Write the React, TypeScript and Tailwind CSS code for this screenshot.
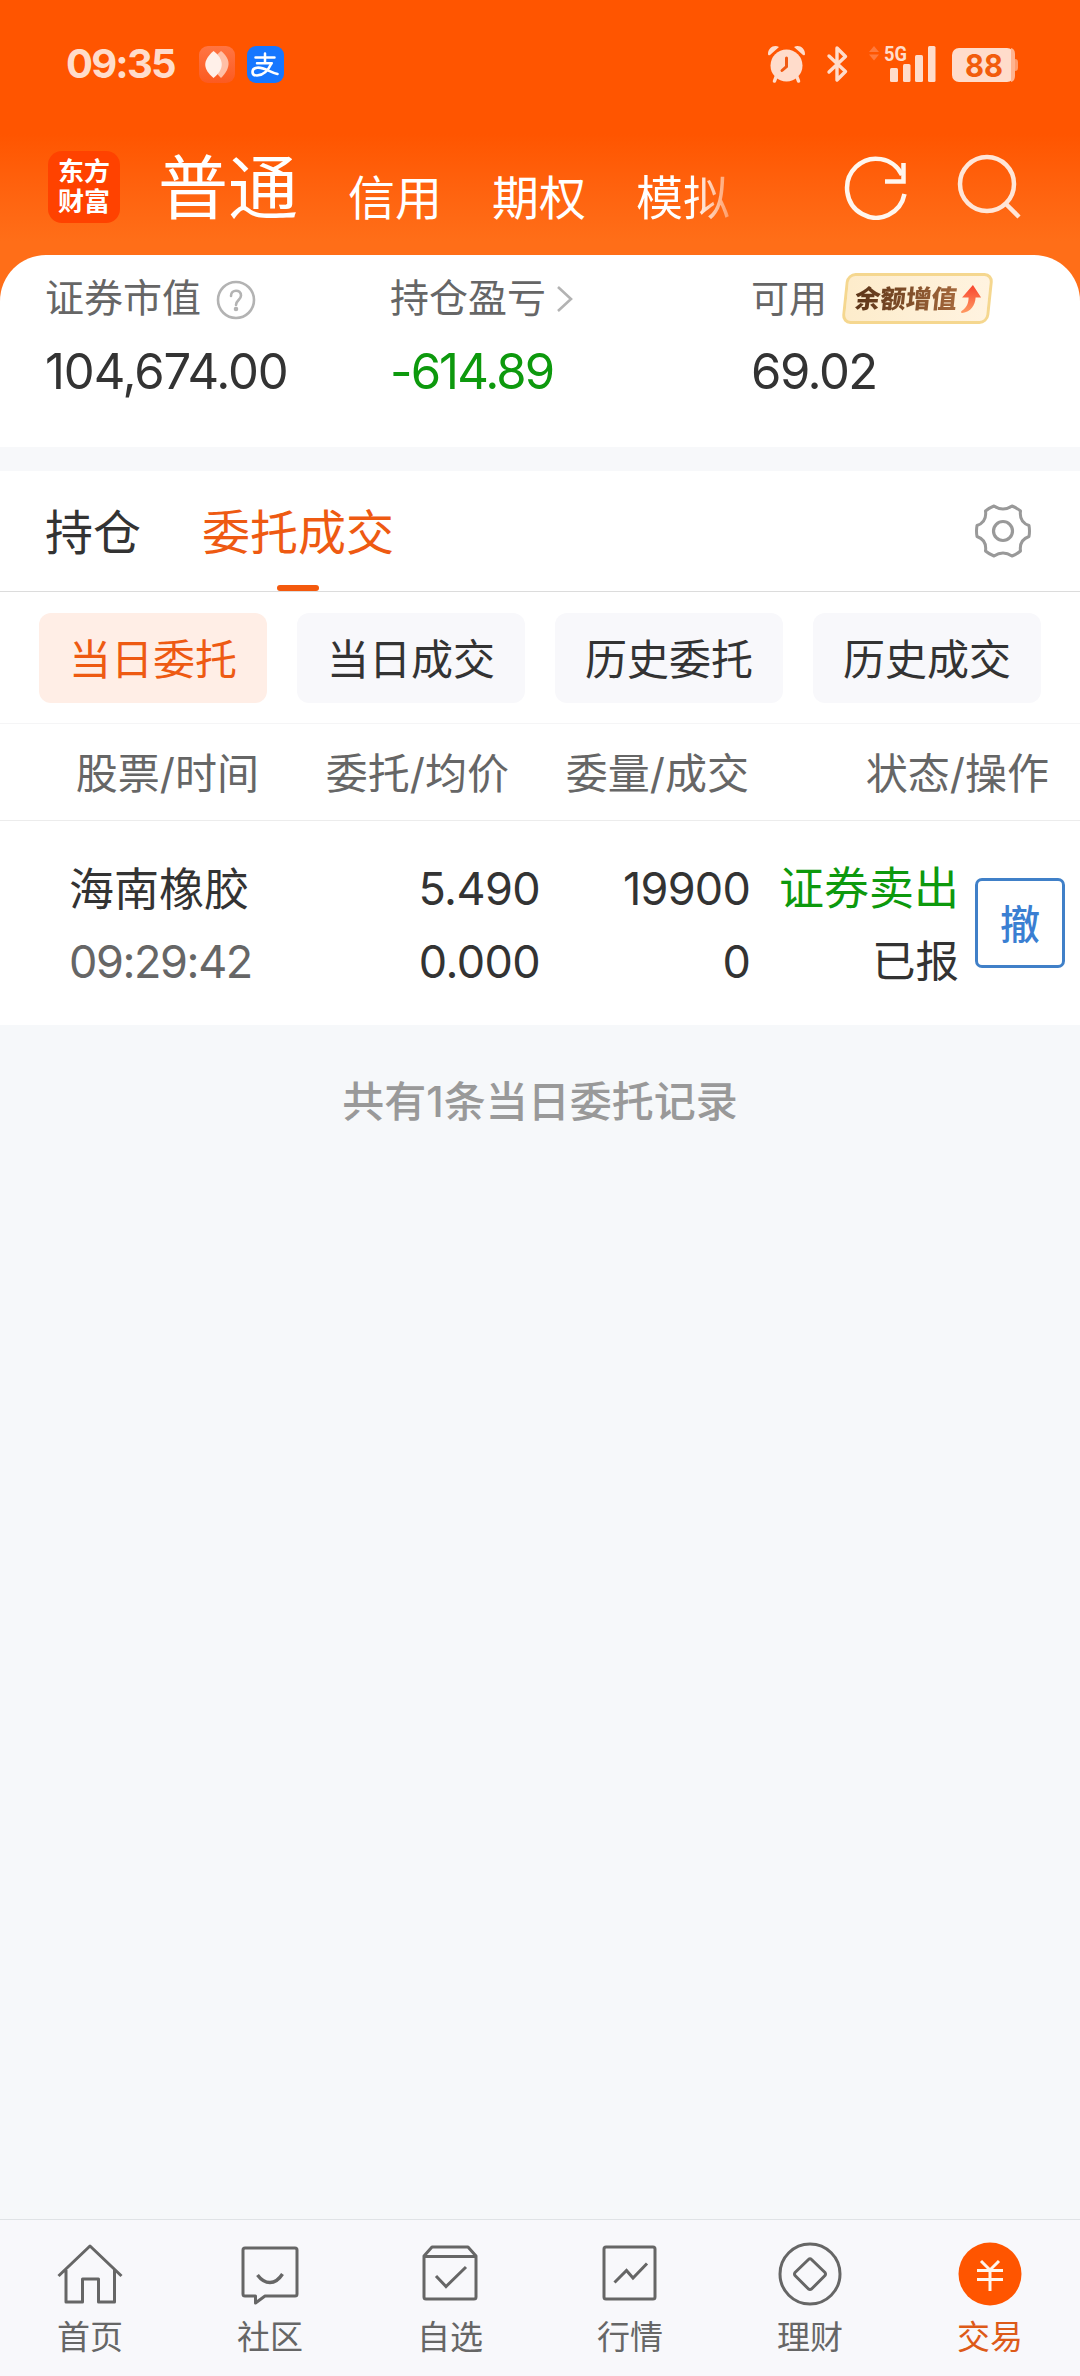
import type { ReactNode } from "react";

const chips = ["当日委托", "当日成交", "历史委托", "历史成交"];

function StatusBar() {
  return (
    <div className="flex h-[130px] items-start justify-between pl-[66px] pr-[60px]">
      <div className="flex items-center pt-[43px]">
        <span className="w-[133px] text-[40px] leading-[42px] font-bold tracking-[-1.8px] text-[#ffdccb]">09:35</span>
        <svg width="36" height="37" viewBox="0 0 36 37" className="mr-[12px]">
          <defs>
            <linearGradient id="petal" x1="0" y1="0" x2="0" y2="1">
              <stop offset="0" stopColor="#ff7543" />
              <stop offset="1" stopColor="#fc5a20" />
            </linearGradient>
          </defs>
          <rect width="36" height="37" rx="9" fill="url(#petal)" />
          <path d="M22 5C31 12 33 21 22 32C12 23 12 13 22 5Z" fill="#ffbfa6" />
          <path d="M14.500 5C3 15 4 23 14.500 32C26 23 25 13 14.500 5Z" fill="#fff0e9" />
        </svg>
        <span className="flex h-[37px] w-[37px] items-center justify-center rounded-[9px] bg-[#1677ff]">
          <svg width="37" height="37" viewBox="0 0 37 37" fill="none" stroke="#fff" strokeLinecap="round">
            <path d="M8.500 11.500H27.500M18 7.500V17M10 17.300H24.500" strokeWidth="2.500" />
            <path d="M24.500 17.300C21 25 16 29.500 10 29.500C4 29.500 4 22.500 10 21.700C17 20.800 22 26 30.500 28" strokeWidth="2.600" />
          </svg>
        </span>
      </div>
      <svg width="253" height="42" viewBox="767 43 253 42" className="mt-[43px]">
        <g fill="#ffdccb">
          <circle cx="786.500" cy="65.500" r="16" />
          <path d="M768 54C768 48 774 44 779 47L770 55Q768 56 768 54ZM805 54C805 48 799 44 794 47L803 55Q805 56 805 54Z" />
          <path d="M776 77L774.500 81M797 77L798.500 81" stroke="#ffdccb" strokeWidth="3.500" strokeLinecap="round" />
          <rect x="890" y="68" width="8" height="14" rx="1.500" />
          <rect x="903" y="64" width="7.500" height="18" rx="1.500" />
          <rect x="915" y="55" width="8" height="27" rx="1.500" />
          <rect x="928" y="46" width="7.500" height="36" rx="1.500" />
          <rect x="952" y="48" width="62" height="34" rx="7" />
        </g>
        <path d="M786.500 58V66.500L782 70.500" fill="none" stroke="#f05a14" strokeWidth="3" strokeLinecap="round" />
        <path d="M829 56L845.500 71.500L837 80V48L845.500 56.500L829 72" fill="none" stroke="#ffdccb" strokeWidth="3.400" strokeLinecap="round" strokeLinejoin="round" />
        <path d="M869 52L874 46L879 52ZM869 54.500L874 60.500L879 54.500Z" fill="#ff7a3c" />
        <path d="M1011 48Q1015 49 1015 54V76Q1015 81 1011 82Z" fill="#ffb38f" />
        <path d="M1015 59Q1018 59 1018 62V68Q1018 71 1015 71Z" fill="#ff9b6c" />
        <text x="884" y="61" fontFamily="Roboto" fontWeight="700" fontSize="21" textLength="23" lengthAdjust="spacingAndGlyphs" fill="#ffdccb">5G</text>
        <text x="965" y="76.500" fontFamily="Inter" fontWeight="700" fontSize="31" textLength="38" lengthAdjust="spacingAndGlyphs" fill="#f25c0c">88</text>
      </svg>
    </div>
  );
}

function TopTabs() {
  return (
    <div className="flex h-[125px] items-start pl-[48px] text-white">
      <div className="mt-[21px] flex h-[72px] w-[72px] flex-col items-center justify-center rounded-[14px] bg-[#ff4200] text-[26px] leading-[30px] font-bold">
        <span>东方</span>
        <span>财富</span>
      </div>
      <span className="mt-[24px] ml-[38px] w-[190px] text-[70px] leading-[70px]">普通</span>
      <div className="mt-[43px] flex h-[50px] gap-[50px] text-[47px] leading-[50px]">
        <span>信用</span>
        <span>期权</span>
        <span className="bg-linear-to-r from-white from-60% to-[#ff9a62] bg-clip-text text-transparent">模拟</span>
      </div>
      <svg width="64" height="66" viewBox="844 155 64 66" className="mt-[24px] ml-[114px]" fill="none" stroke="#fff6ee" strokeWidth="4.500">
        <path d="M904.500 195A29 29.500 0 1 1 902 176" />
        <path d="M903.500 164V182.500H885" />
      </svg>
      <svg width="66" height="68" viewBox="957 153 66 68" className="mt-[23px] ml-[49px]" fill="none" stroke="#ffe6d8" strokeWidth="4.500">
        <circle cx="987" cy="184" r="27" />
        <path d="M1005 203L1019 217" />
      </svg>
    </div>
  );
}

function Summary() {
  return (
    <div className="flex h-[192px] rounded-t-[46px] bg-white text-[39px] text-[#666]">
      <div className="w-[345px] pl-[45px]">
        <div className="mt-[18px] flex h-[50px] items-center">
          <span>证券市值</span>
          <svg width="40" height="40" viewBox="0 0 40 40" className="mt-[3px] ml-[15px]" fill="none" stroke="#b3b3b3" strokeWidth="2.600">
            <circle cx="20" cy="20" r="18" />
            <path d="M15 16C15 9 25 9 25 15.500C25 20 20 20 20 25" strokeLinecap="round" />
            <circle cx="20" cy="29" r="1" fill="#b3b3b3" />
          </svg>
        </div>
        <Amount className="tracking-[-1.1px] text-[#333]">104,674.00</Amount>
      </div>
      <div className="w-[360px] pl-[45px]">
        <div className="mt-[18px] flex h-[50px] items-center">
          <span>持仓盈亏</span>
          <svg width="18" height="28" viewBox="0 0 18 28" className="mt-[2px] ml-[10px]" fill="none" stroke="#b3b3b3" strokeWidth="2.600">
            <path d="M2 2L15 14L2 26" />
          </svg>
        </div>
        <Amount className="tracking-[-1.9px] text-[#0d990d]">-614.89</Amount>
      </div>
      <div className="pl-[46px]">
        <div className="mt-[18px] flex h-[50px] items-center">
          <span className="w-[93px] text-[38px]">可用</span>
          <span className="mt-[1px] flex h-[51px] w-[147px] -skew-x-6 items-center rounded-[9px] border-[3px] border-[#f5d78f] bg-linear-to-r from-[#fdeccb] to-[#fff3e0] pl-[8px]">
            <span className="bg-linear-to-r from-[#5c3518] to-[#a4683c] bg-clip-text text-[25.500px] leading-[40px] font-black text-transparent">余额增值</span>
            <svg width="22" height="30" viewBox="0 0 22 30" className="ml-[4px]">
              <defs>
                <linearGradient id="rise" x1="0" y1="0" x2="0" y2="1">
                  <stop offset="0" stopColor="#f8442e" />
                  <stop offset="1" stopColor="#ff9a62" />
                </linearGradient>
              </defs>
              <path d="M10.500 1L20 13.500H14.500C15 21 11 28 3 29C1 29 1 27.500 2.500 26.500C7 23 8 19 7.500 13.500H1Z" fill="url(#rise)" />
            </svg>
          </span>
        </div>
        <Amount className="tracking-[-1.5px] text-[#333]">69.02</Amount>
      </div>
    </div>
  );
}

function Amount({ className, children }: { className: string; children: ReactNode }) {
  return <div className={`mt-[19px] h-[60px] text-[49px] leading-[60px] whitespace-nowrap ${className}`}>{children}</div>;
}

function SectionTabs() {
  return (
    <div className="flex h-[121px] items-center border-b border-[#dcdcdc] pl-[45px] pr-[49px] text-[48px]">
      <span className="mr-[61px] pt-[3px] text-[#333]">持仓</span>
      <span className="relative flex h-full items-center pt-[3px] text-[#ee5a12]">
        委托成交
        <i className="absolute bottom-0 left-1/2 h-[6px] w-[42px] -translate-x-1/2 rounded-full bg-[#f4590d]" />
      </span>
      <svg width="56" height="56" viewBox="-28 -28 56 56" className="ml-auto" fill="none" stroke="#999" strokeWidth="3" strokeLinejoin="round">
        <circle r="9.500" strokeWidth="3.200" />
        <path d="M-9 -25Q0 -19 9 -25Q14 -23 17.500 -20Q16 -9 26 -5.500Q27 0 26 5.500Q16 9 17.500 20Q14 23 9 25Q0 19 -9 25Q-14 23 -17.500 20Q-16 9 -26 5.500Q-27 0 -26 -5.500Q-16 -9 -17.500 -20Q-14 -23 -9 -25Z" />
      </svg>
    </div>
  );
}

function Orders() {
  return (
    <>
      <div className="flex h-[132px] gap-[30px] border-b border-[#f5f5f6] px-[39px] pt-[21px]">
        {chips.map((label, i) => (
          <div
            key={label}
            className={`flex h-[90px] flex-1 items-center justify-center rounded-[12px] pt-[2px] text-[42px] ${i === 0 ? "bg-[#ffeee6] text-[#ee5a12]" : "bg-[#f8f8fb] text-[#333]"}`}
          >
            {label}
          </div>
        ))}
      </div>
      <div className="flex h-[97px] items-center border-b border-[#ececec] pt-[2px] text-[42px] text-[#666]">
        <span className="w-[259px] text-right">股票/时间</span>
        <span className="w-[250px] text-right">委托/均价</span>
        <span className="w-[240px] text-right">委量/成交</span>
        <span className="w-[300px] text-right">状态/操作</span>
      </div>
      <div className="flex h-[204px] text-[45px] leading-[73px] text-[#333]">
        <div className="w-[300px] pt-[32px] pl-[69px]">
          <div>海南橡胶</div>
          <div className="-mt-px tracking-[-1.4px] text-[#666]">09:29:42</div>
        </div>
        <div className="w-[240px] pt-[31px] text-right tracking-[-0.6px]">
          <div>5.490</div>
          <div>0.000</div>
        </div>
        <div className="w-[210px] pt-[31px] text-right tracking-[-0.8px]">
          <div>19900</div>
          <div>0</div>
        </div>
        <div className="w-[209px] pt-[31px] text-right">
          <div className="text-[#0d990d]">证券卖出</div>
          <div className="text-[43.500px]">已报</div>
        </div>
        <div className="mt-[57px] ml-[16px] flex h-[90px] w-[90px] items-center justify-center rounded-[7px] border-[3px] border-[#4080c8] pt-[2px] text-[40px] font-medium text-[#3a7fd2]">撤</div>
      </div>
    </>
  );
}

function NavItem({ label, active = false, children }: { label: string; active?: boolean; children: ReactNode }) {
  return (
    <div className={`flex flex-1 flex-col items-center pt-[20px] text-[33px] leading-[40px] ${active ? "text-[#dd5a18]" : "text-[#666]"}`}>
      <svg width="68" height="68" viewBox="-34 -34 68 68" fill="none" stroke={active ? "#fff6ee" : "#666"} strokeWidth="3" strokeLinejoin="round">
        {children}
      </svg>
      <span className="mt-[9px]">{label}</span>
    </div>
  );
}

function BottomNav() {
  return (
    <nav className="flex h-[157px] border-t border-[#e0e3e6] bg-[#f8f8fb]">
      <NavItem label="首页">
        <path d="M-31.500 2L0 -28L31.500 2M-24 -4V28H-7.500V5H8.500V28H24.500V-4" />
      </NavItem>
      <NavItem label="社区">
        <path d="M-25 -26H25Q27 -26 27 -24V20Q27 22 25 22H-5L-14.500 29V22H-25Q-27 22 -27 20V-24Q-27 -26 -25 -26Z" />
        <path d="M-12.500 1Q-7 8.500 0 8.500T12.500 0" strokeWidth="3.400" />
      </NavItem>
      <NavItem label="自选">
        <path d="M-26 -18L-18 -27H18L26 -18V23Q26 25 24 25H-24Q-26 25 -26 23ZM-26 -17.500H26" />
        <path d="M-14 2L-4 12.500L16 -7" strokeLinejoin="miter" />
      </NavItem>
      <NavItem label="行情">
        <rect x="-26" y="-27" width="51" height="52" rx="2" />
        <path d="M-15.500 8.500L-3.500 -3.500L3 4L17 -10.500" strokeLinejoin="miter" />
      </NavItem>
      <NavItem label="理财">
        <circle r="30" />
        <path d="M-1.500 -14.500Q0 -16 1.500 -14.500L15 -1.500Q16 0 15 1.500L1.500 15Q0 16 -1.500 15L-15 1.500Q-16 0 -15 -1.500Z" />
      </NavItem>
      <NavItem label="交易" active>
        <circle r="31.500" fill="#ff5500" stroke="none" />
        <path d="M-9 -13L0 -4L9 -13M0 -4V17M-13 -3.500H13M-13 5.500H13" strokeLinejoin="miter" />
      </NavItem>
    </nav>
  );
}

export default function App() {
  return (
    <div className="flex h-[2376px] w-[1080px] flex-col bg-[#f6f8fa] font-[Inter,'Noto_Sans_CJK_SC',sans-serif]">
      <header className="bg-linear-to-b from-[#ff5500] from-30% to-[#ff6e18] to-54%">
        <StatusBar />
        <TopTabs />
        <Summary />
      </header>
      <div className="h-[24px] bg-[#f7f8fa]" />
      <section className="bg-white">
        <SectionTabs />
        <Orders />
      </section>
      <p className="mt-[52px] flex-1 text-center text-[42px] leading-[50px] font-medium text-[#999]">共有1条当日委托记录</p>
      <BottomNav />
    </div>
  );
}
